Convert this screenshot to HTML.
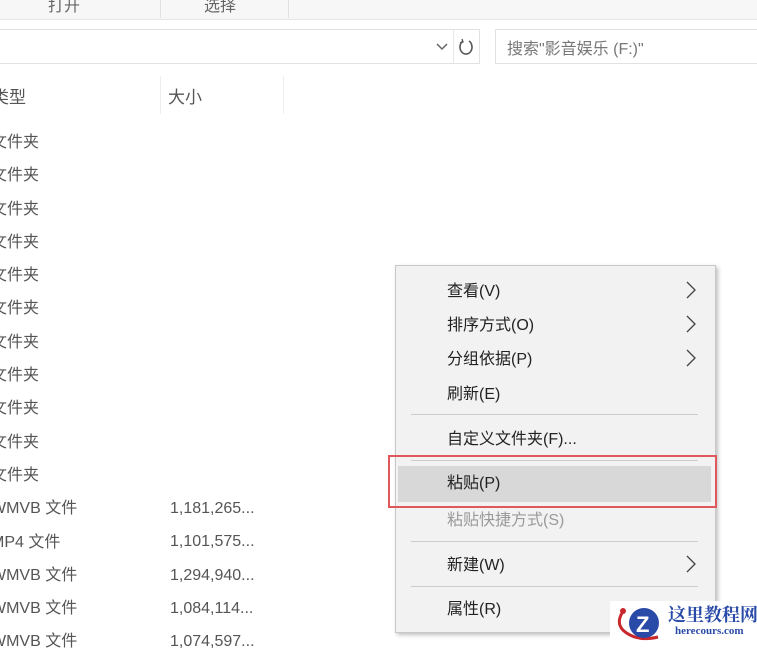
<!DOCTYPE html>
<html><head><meta charset="utf-8"><style>
body{margin:0;width:757px;height:644px;overflow:hidden;background:#fff;position:relative;font-family:"Liberation Sans","Noto Sans CJK SC",sans-serif;color:#444}
.a{position:absolute;white-space:nowrap}
.t{font-size:16px;color:#555}
.m{font-size:16px;color:#222}
.sep{position:absolute;left:411px;width:287px;height:1px;background:#ccc}
.chev{position:absolute;left:684px;width:14px;height:20px}
</style></head><body>
<div class="a" style="left:0;top:0;width:757px;height:19px;background:#f7f7f7;border-bottom:1px solid #e6e6e6"></div>
<div class="a" style="left:160px;top:0;width:1px;height:18px;background:#e2e2e2"></div>
<div class="a" style="left:288px;top:0;width:1px;height:18px;background:#e2e2e2"></div>
<div class="a t" style="left:48px;top:-8px;color:#666">打开</div>
<div class="a t" style="left:204px;top:-8px;color:#666">选择</div>
<div class="a" style="left:-2px;top:29px;width:480px;height:33px;border:1px solid #e2e2e2"></div>
<div class="a" style="left:453px;top:30px;width:1px;height:33px;background:#e6e6e6"></div>
<svg class="a" style="left:436px;top:42px" width="12" height="10"><path d="M1 2 L6 7 L11 2" stroke="#666" fill="none" stroke-width="1.5"/></svg>
<svg class="a" style="left:458px;top:37px" width="16" height="20"><path d="M5 4 A6 7 0 1 0 11 4" stroke="#555" fill="none" stroke-width="1.6"/><path d="M4 2 L5 5 L2 6" stroke="#555" fill="none" stroke-width="1.3"/></svg>
<div class="a" style="left:495px;top:29px;width:270px;height:33px;border:1px solid #e2e2e2"></div>
<div class="a t" style="left:507px;top:35px;color:#777">搜索"影音娱乐 (F:)"</div>
<div class="a" style="left:160px;top:76px;width:1px;height:38px;background:#eee"></div>
<div class="a" style="left:283px;top:76px;width:1px;height:38px;background:#eee"></div>
<div class="a t" style="left:-8px;top:83px;font-size:17px">类型</div>
<div class="a t" style="left:168px;top:83px;font-size:17px">大小</div>
<div class="a t" style="left:-9px;top:126px;line-height:33.3px">文件夹<br>文件夹<br>文件夹<br>文件夹<br>文件夹<br>文件夹<br>文件夹<br>文件夹<br>文件夹<br>文件夹<br>文件夹<br>WMVB 文件<br>MP4 文件<br>WMVB 文件<br>WMVB 文件<br>WMVB 文件</div>
<div class="a t" style="left:170px;top:492px;line-height:33.3px">1,181,265...<br>1,101,575...<br>1,294,940...<br>1,084,114...<br>1,074,597...</div>
<div class="a" style="left:395px;top:265px;width:319px;height:366px;background:#f2f2f2;border:1px solid #c8c8c8;box-shadow:2px 2px 4px rgba(0,0,0,.25)"></div>
<div class="a m" style="left:447px;top:277px">查看(V)</div>
<div class="a m" style="left:447px;top:311px">排序方式(O)</div>
<div class="a m" style="left:447px;top:345px">分组依据(P)</div>
<div class="a m" style="left:447px;top:380px">刷新(E)</div>
<svg class="chev" style="top:280px"><path d="M3 2 L11 10 L3 18" stroke="#444" fill="none" stroke-width="1.3"/></svg>
<svg class="chev" style="top:314px"><path d="M3 2 L11 10 L3 18" stroke="#444" fill="none" stroke-width="1.3"/></svg>
<svg class="chev" style="top:348px"><path d="M3 2 L11 10 L3 18" stroke="#444" fill="none" stroke-width="1.3"/></svg>
<div class="sep" style="top:414px"></div>
<div class="a m" style="left:447px;top:425px">自定义文件夹(F)...</div>
<div class="sep" style="top:460px"></div>
<div class="a" style="left:398px;top:466px;width:313px;height:36px;background:#d8d8d8"></div>
<div class="a" style="left:388px;top:455px;width:325px;height:49px;border:2px solid #e0575c"></div>
<div class="a m" style="left:447px;top:469px">粘贴(P)</div>
<div class="a m" style="left:447px;top:506px;color:#9a9a9a">粘贴快捷方式(S)</div>
<div class="sep" style="top:541px"></div>
<div class="a m" style="left:447px;top:551px">新建(W)</div>
<svg class="chev" style="top:554px"><path d="M3 2 L11 10 L3 18" stroke="#444" fill="none" stroke-width="1.3"/></svg>
<div class="sep" style="top:586px"></div>
<div class="a m" style="left:447px;top:595px">属性(R)</div>
<div class="a" style="left:610px;top:601px;width:147px;height:43px;background:#fff"></div>
<svg class="a" style="left:612px;top:601px" width="58" height="43"><path d="M10 12 Q2 26 18 34 Q30 40 46 36" stroke="#c8282c" fill="none" stroke-width="3"/><circle cx="11" cy="10" r="3" fill="#c8282c"/><circle cx="32" cy="22" r="15" fill="#2a4aa8"/><text x="24" y="31" font-size="22" font-weight="bold" fill="#fff" font-family="Liberation Sans">Z</text></svg>
<div class="a" style="left:668px;top:601px;font-family:'Liberation Serif','Noto Serif CJK SC',serif;font-weight:bold;font-size:18px;color:#2a4aa8">这里教程网</div>
<div class="a" style="left:675px;top:625px;font-family:'Liberation Serif',serif;font-weight:bold;font-size:11px;color:#2a4aa8">herecours.com</div>
</body></html>
